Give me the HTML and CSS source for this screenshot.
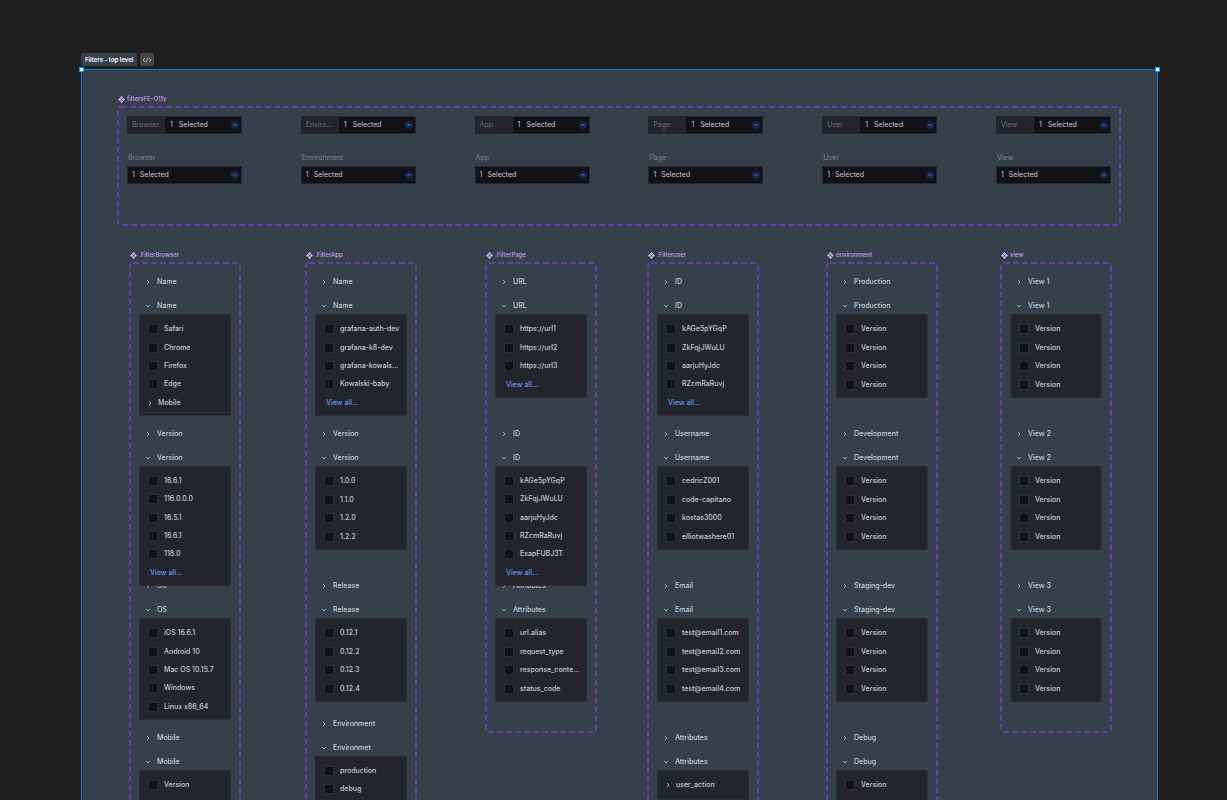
FILE: index.html
```html
<!doctype html>
<html lang="en">
<head>
    <meta charset="UTF-8">
    <meta name="viewport" content="width=device-width, initial-scale=1.0">
    <title>Filters - top level</title>
    <link rel="stylesheet" href="styles.css">
</head>
<body>
<svg class="sprite" aria-hidden="true">
    <symbol id="component" viewBox="0 0 14 14">
        <path d="M7 0l3.2 3.2L7 6.4 3.8 3.2zM7 7.6l3.2 3.2L7 14l-3.2-3.2zM3.2 3.8L6.4 7l-3.2 3.2L0 7zM10.8 3.8L14 7l-3.2 3.2L7.6 7z"/>
    </symbol>
    <symbol id="right" viewBox="0 0 8 8"><path d="M3 2l2 2-2 2"/></symbol>
    <symbol id="down" viewBox="0 0 8 8"><path d="M2 3l2 2 2-2"/></symbol>
    <symbol id="up" viewBox="0 0 8 8"><path d="M2.2 4.8L4 3l1.8 1.8"/></symbol>
    <symbol id="code" viewBox="0 0 10 8"><path d="M3 2L1 4l2 2M7 2l2 2-2 2M6 1.5L4 6.5"/></symbol>
</svg>

<main class="canvas">
    <div class="tags">
        <h1 class="tag">Filters - top level</h1>
        <button class="tag tag-code" aria-label="Ready for dev"><svg><use href="#code"/></svg></button>
    </div>

    <div class="artboard">
        <span class="handle handle-left"></span>
        <span class="handle handle-right"></span>

        <section class="component component-top">
            <h2 class="name"><svg><use href="#component"/></svg>filtersFE-O11y</h2>
            <div class="frame frame-top">
                <svg class="dashes"><rect class="dash" width="100%" height="100%" rx="3"/></svg>
                <div class="filter">
                    <div class="inline"><span class="prefix">Browser</span><button class="select"><span>1</span>Selected<svg><use href="#up"/></svg></button></div>
                    <span class="caption">Browser</span>
                    <button class="select"><span>1</span>Selected<svg><use href="#up"/></svg></button>
                </div>
                <div class="filter">
                    <div class="inline"><span class="prefix">Enviro...</span><button class="select"><span>1</span>Selected<svg><use href="#up"/></svg></button></div>
                    <span class="caption">Environment</span>
                    <button class="select"><span>1</span>Selected<svg><use href="#up"/></svg></button>
                </div>
                <div class="filter">
                    <div class="inline"><span class="prefix">App</span><button class="select"><span>1</span>Selected<svg><use href="#up"/></svg></button></div>
                    <span class="caption">App</span>
                    <button class="select"><span>1</span>Selected<svg><use href="#up"/></svg></button>
                </div>
                <div class="filter">
                    <div class="inline"><span class="prefix">Page</span><button class="select"><span>1</span>Selected<svg><use href="#up"/></svg></button></div>
                    <span class="caption">Page</span>
                    <button class="select"><span>1</span>Selected<svg><use href="#up"/></svg></button>
                </div>
                <div class="filter">
                    <div class="inline"><span class="prefix">User</span><button class="select"><span>1</span>Selected<svg><use href="#up"/></svg></button></div>
                    <span class="caption">User</span>
                    <button class="select"><span>1</span>Selected<svg><use href="#up"/></svg></button>
                </div>
                <div class="filter">
                    <div class="inline"><span class="prefix">View</span><button class="select"><span>1</span>Selected<svg><use href="#up"/></svg></button></div>
                    <span class="caption">View</span>
                    <button class="select"><span>1</span>Selected<svg><use href="#up"/></svg></button>
                </div>
            </div>
        </section>

        <div class="columns">
            <section class="component">
                <h2 class="name"><svg><use href="#component"/></svg>.FilterBrowser</h2>
                <div class="frame">
                    <svg class="dashes"><rect class="dash" width="100%" height="100%" rx="3"/></svg>
                    <div class="group">
                        <button class="toggle"><svg><use href="#right"/></svg>Name</button>
                        <button class="toggle open"><svg><use href="#down"/></svg>Name</button>
                        <div class="panel rows-5">
                            <label class="option"><input type="checkbox">Safari</label>
                            <label class="option"><input type="checkbox">Chrome</label>
                            <label class="option"><input type="checkbox">Firefox</label>
                            <label class="option"><input type="checkbox">Edge</label>
                            <button class="nested"><svg><use href="#right"/></svg>Mobile</button>
                        </div>
                    </div>
                    <div class="group">
                        <button class="toggle"><svg><use href="#right"/></svg>Version</button>
                        <button class="toggle open"><svg><use href="#down"/></svg>Version</button>
                        <div class="panel rows-6">
                            <label class="option"><input type="checkbox">16.6.1</label>
                            <label class="option"><input type="checkbox">116.0.0.0</label>
                            <label class="option"><input type="checkbox">16.5.1</label>
                            <label class="option"><input type="checkbox">16.6.1</label>
                            <label class="option"><input type="checkbox">118.0</label>
                            <a class="more" href="#">View all...</a>
                        </div>
                    </div>
                    <div class="group">
                        <button class="toggle"><svg><use href="#right"/></svg>OS</button>
                        <button class="toggle open"><svg><use href="#down"/></svg>OS</button>
                        <div class="panel rows-5">
                            <label class="option"><input type="checkbox">iOS 16.6.1</label>
                            <label class="option"><input type="checkbox">Android 10</label>
                            <label class="option"><input type="checkbox">Mac OS 10.15.7</label>
                            <label class="option"><input type="checkbox">Windows</label>
                            <label class="option"><input type="checkbox">Linux x86_64</label>
                        </div>
                    </div>
                    <div class="group">
                        <button class="toggle"><svg><use href="#right"/></svg>Mobile</button>
                        <button class="toggle open"><svg><use href="#down"/></svg>Mobile</button>
                        <div class="panel rows-auto">
                            <label class="option"><input type="checkbox">Version</label>
                        </div>
                    </div>
                </div>
            </section>

            <section class="component">
                <h2 class="name"><svg><use href="#component"/></svg>.FilterApp</h2>
                <div class="frame">
                    <svg class="dashes"><rect class="dash" width="100%" height="100%" rx="3"/></svg>
                    <div class="group">
                        <button class="toggle"><svg><use href="#right"/></svg>Name</button>
                        <button class="toggle open"><svg><use href="#down"/></svg>Name</button>
                        <div class="panel rows-5">
                            <label class="option"><input type="checkbox">grafana-auth-dev</label>
                            <label class="option"><input type="checkbox">grafana-k8-dev</label>
                            <label class="option"><input type="checkbox">grafana-kowals...</label>
                            <label class="option"><input type="checkbox">Kowalski-baby</label>
                            <a class="more" href="#">View all...</a>
                        </div>
                    </div>
                    <div class="group">
                        <button class="toggle"><svg><use href="#right"/></svg>Version</button>
                        <button class="toggle open"><svg><use href="#down"/></svg>Version</button>
                        <div class="panel rows-4">
                            <label class="option"><input type="checkbox">1.0.0</label>
                            <label class="option"><input type="checkbox">1.1.0</label>
                            <label class="option"><input type="checkbox">1.2.0</label>
                            <label class="option"><input type="checkbox">1.2.2</label>
                        </div>
                    </div>
                    <div class="group group-short">
                        <button class="toggle"><svg><use href="#right"/></svg>Release</button>
                        <button class="toggle open"><svg><use href="#down"/></svg>Release</button>
                        <div class="panel rows-4">
                            <label class="option"><input type="checkbox">0.12.1</label>
                            <label class="option"><input type="checkbox">0.12.2</label>
                            <label class="option"><input type="checkbox">0.12.3</label>
                            <label class="option"><input type="checkbox">0.12.4</label>
                        </div>
                    </div>
                    <div class="group">
                        <button class="toggle"><svg><use href="#right"/></svg>Environment</button>
                        <button class="toggle open"><svg><use href="#down"/></svg>Environmet</button>
                        <div class="panel rows-auto">
                            <label class="option"><input type="checkbox">production</label>
                            <label class="option"><input type="checkbox">debug</label>
                        </div>
                    </div>
                </div>
            </section>

            <section class="component">
                <h2 class="name"><svg><use href="#component"/></svg>.FilterPage</h2>
                <div class="frame">
                    <svg class="dashes"><rect class="dash" width="100%" height="100%" rx="3"/></svg>
                    <div class="group">
                        <button class="toggle"><svg><use href="#right"/></svg>URL</button>
                        <button class="toggle open"><svg><use href="#down"/></svg>URL</button>
                        <div class="panel rows-4">
                            <label class="option"><input type="checkbox">https://url1</label>
                            <label class="option"><input type="checkbox">https://url2</label>
                            <label class="option"><input type="checkbox">https://url3</label>
                            <a class="more" href="#">View all...</a>
                        </div>
                    </div>
                    <div class="group">
                        <button class="toggle"><svg><use href="#right"/></svg>ID</button>
                        <button class="toggle open"><svg><use href="#down"/></svg>ID</button>
                        <div class="panel rows-6">
                            <label class="option"><input type="checkbox">kAGe5pYGqP</label>
                            <label class="option"><input type="checkbox">ZkFqjJWuLU</label>
                            <label class="option"><input type="checkbox">aarjuHyJdc</label>
                            <label class="option"><input type="checkbox">RZcmRaRuvj</label>
                            <label class="option"><input type="checkbox">EsapFUBJ3T</label>
                            <a class="more" href="#">View all...</a>
                        </div>
                    </div>
                    <div class="group">
                        <button class="toggle"><svg><use href="#right"/></svg>Attributes</button>
                        <button class="toggle open"><svg><use href="#down"/></svg>Attributes</button>
                        <div class="panel rows-4">
                            <label class="option"><input type="checkbox">url.alias</label>
                            <label class="option"><input type="checkbox">request_type</label>
                            <label class="option"><input type="checkbox">response_conte...</label>
                            <label class="option"><input type="checkbox">status_code</label>
                        </div>
                    </div>
                </div>
            </section>

            <section class="component">
                <h2 class="name"><svg><use href="#component"/></svg>.Filteruser</h2>
                <div class="frame">
                    <svg class="dashes"><rect class="dash" width="100%" height="100%" rx="3"/></svg>
                    <div class="group">
                        <button class="toggle"><svg><use href="#right"/></svg>ID</button>
                        <button class="toggle open"><svg><use href="#down"/></svg>ID</button>
                        <div class="panel rows-5">
                            <label class="option"><input type="checkbox">kAGe5pYGqP</label>
                            <label class="option"><input type="checkbox">ZkFqjJWuLU</label>
                            <label class="option"><input type="checkbox">aarjuHyJdc</label>
                            <label class="option"><input type="checkbox">RZcmRaRuvj</label>
                            <a class="more" href="#">View all...</a>
                        </div>
                    </div>
                    <div class="group">
                        <button class="toggle"><svg><use href="#right"/></svg>Username</button>
                        <button class="toggle open"><svg><use href="#down"/></svg>Username</button>
                        <div class="panel rows-4">
                            <label class="option"><input type="checkbox">cedricZ001</label>
                            <label class="option"><input type="checkbox">code-capitano</label>
                            <label class="option"><input type="checkbox">kostas3000</label>
                            <label class="option"><input type="checkbox">elliotwashere01</label>
                        </div>
                    </div>
                    <div class="group">
                        <button class="toggle"><svg><use href="#right"/></svg>Email</button>
                        <button class="toggle open"><svg><use href="#down"/></svg>Email</button>
                        <div class="panel rows-4">
                            <label class="option"><input type="checkbox">test@email1.com</label>
                            <label class="option"><input type="checkbox">test@email2.com</label>
                            <label class="option"><input type="checkbox">test@email3.com</label>
                            <label class="option"><input type="checkbox">test@email4.com</label>
                        </div>
                    </div>
                    <div class="group">
                        <button class="toggle"><svg><use href="#right"/></svg>Attributes</button>
                        <button class="toggle open"><svg><use href="#down"/></svg>Attributes</button>
                        <div class="panel rows-nested">
                            <button class="nested"><svg><use href="#right"/></svg>user_action</button>
                        </div>
                    </div>
                </div>
            </section>

            <section class="component">
                <h2 class="name"><svg><use href="#component"/></svg>environment</h2>
                <div class="frame">
                    <svg class="dashes"><rect class="dash" width="100%" height="100%" rx="3"/></svg>
                    <div class="group">
                        <button class="toggle"><svg><use href="#right"/></svg>Production</button>
                        <button class="toggle open"><svg><use href="#down"/></svg>Production</button>
                        <div class="panel rows-4">
                            <label class="option"><input type="checkbox">Version</label>
                            <label class="option"><input type="checkbox">Version</label>
                            <label class="option"><input type="checkbox">Version</label>
                            <label class="option"><input type="checkbox">Version</label>
                        </div>
                    </div>
                    <div class="group">
                        <button class="toggle"><svg><use href="#right"/></svg>Development</button>
                        <button class="toggle open"><svg><use href="#down"/></svg>Development</button>
                        <div class="panel rows-4">
                            <label class="option"><input type="checkbox">Version</label>
                            <label class="option"><input type="checkbox">Version</label>
                            <label class="option"><input type="checkbox">Version</label>
                            <label class="option"><input type="checkbox">Version</label>
                        </div>
                    </div>
                    <div class="group">
                        <button class="toggle"><svg><use href="#right"/></svg>Staging-dev</button>
                        <button class="toggle open"><svg><use href="#down"/></svg>Staging-dev</button>
                        <div class="panel rows-4">
                            <label class="option"><input type="checkbox">Version</label>
                            <label class="option"><input type="checkbox">Version</label>
                            <label class="option"><input type="checkbox">Version</label>
                            <label class="option"><input type="checkbox">Version</label>
                        </div>
                    </div>
                    <div class="group">
                        <button class="toggle"><svg><use href="#right"/></svg>Debug</button>
                        <button class="toggle open"><svg><use href="#down"/></svg>Debug</button>
                        <div class="panel rows-auto">
                            <label class="option"><input type="checkbox">Version</label>
                        </div>
                    </div>
                </div>
            </section>

            <section class="component">
                <h2 class="name"><svg><use href="#component"/></svg>view</h2>
                <div class="frame">
                    <svg class="dashes"><rect class="dash" width="100%" height="100%" rx="3"/></svg>
                    <div class="group">
                        <button class="toggle"><svg><use href="#right"/></svg>View 1</button>
                        <button class="toggle open"><svg><use href="#down"/></svg>View 1</button>
                        <div class="panel rows-4">
                            <label class="option"><input type="checkbox">Version</label>
                            <label class="option"><input type="checkbox">Version</label>
                            <label class="option"><input type="checkbox">Version</label>
                            <label class="option"><input type="checkbox">Version</label>
                        </div>
                    </div>
                    <div class="group">
                        <button class="toggle"><svg><use href="#right"/></svg>View 2</button>
                        <button class="toggle open"><svg><use href="#down"/></svg>View 2</button>
                        <div class="panel rows-4">
                            <label class="option"><input type="checkbox">Version</label>
                            <label class="option"><input type="checkbox">Version</label>
                            <label class="option"><input type="checkbox">Version</label>
                            <label class="option"><input type="checkbox">Version</label>
                        </div>
                    </div>
                    <div class="group">
                        <button class="toggle"><svg><use href="#right"/></svg>View 3</button>
                        <button class="toggle open"><svg><use href="#down"/></svg>View 3</button>
                        <div class="panel rows-4">
                            <label class="option"><input type="checkbox">Version</label>
                            <label class="option"><input type="checkbox">Version</label>
                            <label class="option"><input type="checkbox">Version</label>
                            <label class="option"><input type="checkbox">Version</label>
                        </div>
                    </div>
                </div>
            </section>
        </div>
    </div>
</main>
</body>
</html>
```

FILE: styles.css
```css
* {
    box-sizing: border-box;
}

body {
    margin: 0;
    background-color: #1e1e1e;
    color: #c8c9d8;
    font-family: Inter, "Liberation Sans", sans-serif;
    font-size: 7px;
    line-height: 10px;
}

button {
    margin: 0;
    padding: 0;
    border: none;
    background: none;
    color: inherit;
    font: inherit;
    text-align: left;
    cursor: pointer;
}

svg {
    display: block;
    flex: none;
    fill: none;
    stroke: currentColor;
}

.sprite {
    position: absolute;
    width: 0;
    height: 0;
}

.canvas {
    height: 100vh;
    padding: 53px 69px 0 81px;
    overflow: hidden;
}

/* Labels above the artboard */
.tags {
    display: flex;
    gap: 3px;
    margin-bottom: 3px;
}

.tag {
    display: flex;
    align-items: center;
    height: 13px;
    margin: 0;
    padding: 0 4px;
    border-radius: 2px;
    background-color: #36404a;
    color: #ffffff;
    font-size: 6px;
    font-weight: 600;
}

.tag-code {
    padding: 0 2px;
    background-color: #444444;
    color: #b3b3b3;
}

.tag-code svg {
    width: 10px;
    height: 8px;
}

.artboard {
    position: relative;
    padding: 24px 37px 0 36px;
    border: 1px solid #1477c0;
    background-color: #36404a;
}

.handle {
    position: absolute;
    top: -3px;
    width: 5px;
    height: 5px;
    border: 1px solid #0d99ff;
    background-color: #ffffff;
}

.handle-left {
    left: -3px;
}

.handle-right {
    right: -3px;
}

/* Component frames */
.name {
    display: flex;
    align-items: center;
    gap: 2px;
    height: 10px;
    margin: 0 0 3px;
    color: #c79ff0;
    font-size: 6px;
    font-weight: 500;
}

.name svg {
    width: 7px;
    height: 7px;
    fill: #d3b0f7;
    stroke: none;
}

.frame {
    position: relative;
    padding: 10px 9px 3px;
}

.dashes {
    position: absolute;
    inset: 0;
    width: 100%;
    height: 100%;
    overflow: visible;
    pointer-events: none;
}

.dash {
    stroke: #6340a2;
    stroke-width: 2;
    stroke-dasharray: 6 3;
}

/* Top filters */
.frame-top {
    display: flex;
    justify-content: space-between;
    height: 118px;
    padding: 9px;
}

.filter {
    display: flex;
    flex-direction: column;
    width: 115px;
}

.inline {
    display: flex;
    margin-bottom: 19px;
}

.prefix {
    width: 37px;
    padding: 4px 5px;
    background-color: #22252b;
    color: #6b7078;
}

.caption {
    margin-bottom: 3px;
    padding-left: 1px;
    color: #7b828b;
}

.select {
    display: flex;
    flex: 1;
    align-items: center;
    gap: 5px;
    max-height: 18px;
    min-height: 18px;
    padding: 0 2px 0 4px;
    border: 1px solid #24282e;
    background-color: #111217;
}

.inline .select {
    gap: 6px;
    padding-left: 5px;
}

.select svg {
    width: 8px;
    height: 8px;
    margin-left: auto;
    border-radius: 50%;
    background-color: #172648;
    color: #3f70d0;
}

/* Filter columns, the free space between them is shared unevenly */
.columns {
    display: grid;
    grid-template-columns: 110px 66fr 110px 70fr 110px 52fr 110px 69fr 110px 64fr 110px;
    align-items: start;
    margin-top: 25px;
    padding: 0 9px 0 12px;
}

.columns .component:nth-child(2) {
    grid-column: 3;
}

.columns .component:nth-child(3) {
    grid-column: 5;
}

.columns .component:nth-child(4) {
    grid-column: 7;
}

.columns .component:nth-child(5) {
    grid-column: 9;
}

.columns .component:nth-child(6) {
    grid-column: 11;
}

.group {
    display: flex;
    flex-direction: column;
    height: 152px;
}

.group-short {
    height: 138px;
}

.toggle {
    display: flex;
    flex: none;
    align-items: center;
    gap: 5px;
    height: 18px;
    margin-bottom: 6px;
    padding-left: 5px;
    font-weight: 500;
}

.toggle.open {
    height: 17px;
    margin-bottom: 0;
}

.toggle svg,
.nested svg {
    width: 8px;
    height: 8px;
    color: #a4a8b4;
}

.panel {
    display: grid;
    flex: none;
    grid-auto-rows: 1fr;
    padding: 5px 0 3px;
    border: 1px solid #2a2e35;
    background-color: #22252b;
    font-weight: 500;
    z-index: 1;
}

.rows-4 {
    height: 84px;
}

.rows-5 {
    height: 102px;
}

.rows-6 {
    height: 120px;
}

.rows-auto {
    grid-auto-rows: 18px;
    min-height: 84px;
}

.rows-nested {
    grid-auto-rows: 28px;
    min-height: 84px;
    padding: 0;
}

.option {
    display: flex;
    align-items: center;
    gap: 6px;
    padding-left: 8px;
    white-space: nowrap;
}

.option input {
    appearance: none;
    width: 10px;
    height: 10px;
    margin: 0;
    border: 1px solid #2c2f35;
    border-radius: 1px;
    background-color: #111217;
}

.option input:checked {
    background-color: #3d71d9;
}

.nested {
    display: flex;
    align-items: center;
    gap: 4px;
    padding-left: 6px;
    box-shadow: 0 1px #2c2f36;
}

.more {
    align-self: center;
    padding-left: 10px;
    color: #6899f5;
    text-decoration: none;
}
```
